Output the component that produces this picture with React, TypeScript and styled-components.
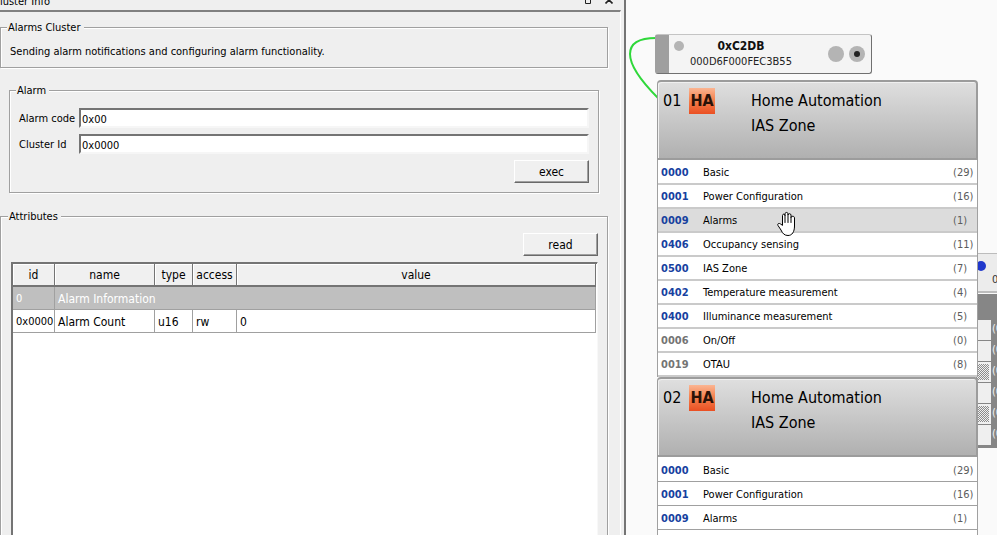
import React from 'react';
import styled, { createGlobalStyle } from 'styled-components';

const GlobalStyle = createGlobalStyle`
  *, *::before, *::after { box-sizing: border-box; }
  body {
    margin: 0;
    background: #fafafa;
    color: #000;
    font: 11px/14px 'DejaVu Sans Condensed', 'DejaVu Sans', sans-serif;
  }
`;

const Page = styled.main`
  display: grid;
  grid-template-columns: 626fr 371fr;
  height: 100vh;
  overflow: hidden;
`;

/* ---------- dock with the cluster details ---------- */

const Dock = styled.aside`
  display: flex;
  flex-direction: column;
  min-width: 0;
  min-height: 0;
  padding-right: 3px;
  background: #efefef;
  border-right: 2px solid #747474;
  overflow: hidden;
`;

const TitleBar = styled.header`
  display: flex;
  align-items: flex-end;
  gap: 13px;
  flex: none;
  height: 10px;
  padding: 0 8px 1px 0;
  overflow: hidden;
`;

const DockTitle = styled.h1`
  flex: 1;
  margin: 0 0 0 -7px;
  font-size: 11px;
  font-weight: 400;
  white-space: nowrap;
`;

const TitleButton = styled.button`
  display: flex;
  padding: 0 0 5px;
  border: 0;
  background: none;
`;

const ScrollArea = styled.div`
  flex: 1;
  min-height: 0;
  padding: 8px 12px 0 0;
  border-top: 2px solid #808080;
  border-right: 1px solid #fff;
  overflow: hidden;
`;

const Group = styled.fieldset<{ $body: string; $outer?: string }>`
  min-width: 0;
  margin: ${p => p.$outer ?? '0'};
  padding: ${p => p.$body};
  border: 1px solid #a0a0a0;
  box-shadow: 1px 1px 0 #fff, inset 1px 1px 0 #fff;
`;

const Legend = styled.legend`
  height: 14px;
  margin-left: -3px;
  padding: 0 3px 0 1px;
  background: #efefef;
  line-height: 16px;
`;

const Description = styled.p`
  margin: 0;
`;

const Form = styled.form`
  display: grid;
  grid-template-columns: 60px 1fr;
  gap: 6px 0;
  align-items: center;
`;

const FieldLabel = styled.label`
  padding-top: 2px;
`;

const Field = styled.input`
  width: 100%;
  min-width: 0;
  height: 20px;
  padding: 2px 1px 0;
  border: 2px solid;
  border-color: #747474 #f6f6f6 #f6f6f6 #747474;
  background: #fff;
  color: #000;
  font: inherit;
  outline: 0;
`;

const Actions = styled.div`
  grid-column: 1 / -1;
  display: flex;
  justify-content: flex-end;
`;

const PushButton = styled.button`
  width: 75px;
  height: 23px;
  padding: 0;
  border: 1px solid;
  border-color: #fff #696969 #696969 #fff;
  box-shadow: inset -1px -1px 0 #a0a0a0;
  background: #f0f0f0;
  color: #000;
  font: 12px/16px 'DejaVu Sans Condensed', 'DejaVu Sans', sans-serif;
`;

const TableFrame = styled.div`
  height: 100vh;
  margin-top: 6px;
  border: 1px solid;
  border-color: #747474 #f8f8f8 #f8f8f8 #747474;
  box-shadow: inset 1px 1px 0 #747474;
  padding: 1px 1px 0 1px;
  background: #fff;
`;

const Table = styled.table`
  width: 100%;
  table-layout: fixed;
  border-collapse: separate;
  border-spacing: 0;
  font-size: 12px;
  line-height: 16px;
  white-space: nowrap;
`;

const HeadCell = styled.th`
  height: 23px;
  padding: 1px 0 0;
  border-right: 1px solid #747474;
  border-bottom: 2px solid #747474;
  box-shadow: inset 1px 1px 0 #fff;
  background: #f0f0f0;
  font-weight: 400;
  text-align: center;
`;

const Cell = styled.td<{ $selected?: boolean }>`
  height: 23px;
  padding: 1px 0 0 3px;
  border-right: 1px solid #a0a0a0;
  border-bottom: 1px solid #a0a0a0;
  background: ${p => (p.$selected ? '#bfbfbf' : '#fff')};
  color: ${p => (p.$selected ? '#fff' : '#000')};
`;

const IdCell = styled(Cell)`
  font-size: 11px;
`;

/* ---------- node graph ---------- */

const Canvas = styled.section`
  position: relative;
  min-width: 0;
  background: #fafafa;
  overflow: hidden;
`;

const Link = styled.svg`
  position: absolute;
  left: 0;
  top: 30px;
`;

const Node = styled.article`
  position: absolute;
  left: 29px;
  top: 34px;
  width: 323px;
`;

const NodeCard = styled.header`
  display: flex;
  align-items: center;
  gap: 5px;
  width: 217px;
  height: 40px;
  padding-right: 6px;
  border: 1px solid;
  border-color: #c4c4c4 #707070 #707070 #9f9f9f;
  border-radius: 3px;
  background: #f4f4f4;
`;

const Grip = styled.span`
  align-self: stretch;
  width: 13px;
  background: #9f9f9f;
`;

const Led = styled.span<{ $size: number }>`
  display: grid;
  place-items: center;
  flex: none;
  width: ${p => p.$size}px;
  height: ${p => p.$size}px;
  border-radius: 50%;
  background: #b4b4b4;
`;

const SmallLed = styled(Led)`
  align-self: flex-start;
  margin-top: 6px;
`;

const LedDot = styled.i`
  width: 6px;
  height: 6px;
  border-radius: 50%;
  background: #222;
`;

const Address = styled.div`
  flex: 1;
  padding: 0 30px 1px 0;
  color: #222;
  line-height: 16px;
  text-align: center;
  white-space: nowrap;
`;

const ShortAddress = styled.h2`
  margin: 0;
  font-size: 12px;
  line-height: 16px;
  color: #111;
`;

const Endpoints = styled.div`
  margin: 6px 0 0 2px;
`;

const EndpointHeader = styled.header`
  display: grid;
  grid-template-columns: 26px 62px 1fr;
  align-items: start;
  height: 80px;
  padding: 6px 4px 0 5px;
  border: 2px solid #9c9c9c;
  border-left-width: 1px;
  border-radius: 4px 4px 0 0;
  box-shadow: inset 1px 1px 0 #f0f0f0;
  background: linear-gradient(#dfdfdf, #b0b0b0);
  font-size: 16px;
  line-height: 25px;
`;

const EndpointTitle = styled.h3`
  margin: 0;
  font-size: 16px;
  font-weight: 400;
`;

const Badge = styled.span`
  display: grid;
  place-items: center;
  width: 26px;
  height: 26px;
  background: linear-gradient(#fbb592, #f5824f 45%, #ea4f22);
  color: #2a1208;
  font-size: 16px;
  font-weight: 700;
  line-height: 26px;
`;

const ClusterList = styled.ul`
  margin: 0;
  padding: 1px 0 0;
  list-style: none;
  border: solid #a0a0a0;
  border-width: 0 1px;
  background: #fff;
`;

const Cluster = styled.li<{ $active?: boolean; $thin?: boolean }>`
  display: grid;
  grid-template-columns: 42px 1fr 24px;
  align-items: center;
  height: 24px;
  padding: 2px 0 0 3px;
  border-bottom: ${p => (p.$thin ? '1px solid #a0a0a0' : '2px solid #cacaca')};
  background: ${p => (p.$active ? '#dcdcdc' : '#fff')};
`;

const ClusterId = styled.strong<{ $client?: boolean }>`
  color: ${p => (p.$client ? '#747474' : '#17419f')};
`;

const Count = styled.span`
  color: #5c5c5c;
`;

const NeighbourNode = styled.article`
  position: absolute;
  left: 340px;
  top: 253px;
  width: 200px;
`;

const NeighbourCard = styled.header`
  display: flex;
  gap: 6px;
  height: 40px;
  padding: 7px 0 0 10px;
  border: solid #bcbcbc;
  border-width: 1px 0 2px;
  background: #ececec;
`;

const BlueLed = styled.span`
  width: 10px;
  height: 10px;
  border-radius: 50%;
  background: #2038cc;
`;

const NeighbourAddress = styled.span`
  margin-top: 12px;
  color: #333;
`;

const NeighbourBody = styled.ul`
  display: grid;
  gap: 1px;
  margin: 1px 0 0;
  padding: 26px 0 3px;
  list-style: none;
  background: #868686;
`;

const NeighbourRow = styled.li`
  display: flex;
  gap: 1px;
  height: 20px;
  color: #f4f4f4;
  line-height: 18px;
`;

const Swatch = styled.span<{ $dither: boolean }>`
  width: 25px;
  border: ${p => (p.$dither ? '2px solid #f0f0f0' : '0')};
  background: ${p =>
    p.$dither
      ? 'repeating-conic-gradient(#8c8c8c 0 25%, #f0f0f0 0 50%) 0 0 / 2px 2px'
      : '#efefef'};
`;

const Hand = styled.svg`
  position: absolute;
  left: 151px;
  top: 211px;
`;

type ClusterRow = { id: string; name: string; count: number; client?: boolean; active?: boolean };

const firstClusters: ClusterRow[] = [
  { id: '0000', name: 'Basic', count: 29 },
  { id: '0001', name: 'Power Configuration', count: 16 },
  { id: '0009', name: 'Alarms', count: 1, active: true },
  { id: '0406', name: 'Occupancy sensing', count: 11 },
  { id: '0500', name: 'IAS Zone', count: 7 },
  { id: '0402', name: 'Temperature measurement', count: 4 },
  { id: '0400', name: 'Illuminance measurement', count: 5 },
  { id: '0006', name: 'On/Off', count: 0, client: true },
  { id: '0019', name: 'OTAU', count: 8, client: true },
];

const secondClusters: ClusterRow[] = [
  { id: '0000', name: 'Basic', count: 29 },
  { id: '0001', name: 'Power Configuration', count: 16 },
  { id: '0009', name: 'Alarms', count: 1 },
];

const neighbourRows = [false, false, true, false, true, false];

function Endpoint({ number, rows, thin }: { number: string; rows: ClusterRow[]; thin?: boolean }) {
  return (
    <section>
      <EndpointHeader>
        <span>{number}</span>
        <Badge>HA</Badge>
        <EndpointTitle>
          Home Automation
          <br />
          IAS Zone
        </EndpointTitle>
      </EndpointHeader>
      <ClusterList>
        {rows.map(row => (
          <Cluster key={row.id} $active={row.active} $thin={thin}>
            <ClusterId $client={row.client}>{row.id}</ClusterId>
            <span>{row.name}</span>
            <Count>({row.count})</Count>
          </Cluster>
        ))}
      </ClusterList>
    </section>
  );
}

export default function App() {
  return (
    <>
      <GlobalStyle />
      <Page>
        <Dock>
          <TitleBar>
            <DockTitle>Cluster Info</DockTitle>
            <TitleButton type="button" aria-label="Float">
              <svg width="8" height="8" viewBox="0 0 8 8" fill="none" stroke="#222">
                <path d="M1.5 1.5H6.5V7.5H1.5Z" />
              </svg>
            </TitleButton>
            <TitleButton type="button" aria-label="Close">
              <svg width="8" height="8" viewBox="0 0 8 8" fill="none" stroke="#222" strokeWidth="1.6">
                <path d="M0.5 0.5L7.5 7.5M7.5 0.5L0.5 7.5" />
              </svg>
            </TitleButton>
          </TitleBar>
          <ScrollArea>
            <Group $body="11px 9px 8px">
              <Legend>Alarms Cluster</Legend>
              <Description>
                Sending alarm notifications and configuring alarm functionality.
              </Description>
            </Group>
            <Group $body="11px 9px 9px" $outer="15px 9px 0">
              <Legend>Alarm</Legend>
              <Form onSubmit={e => e.preventDefault()}>
                <FieldLabel htmlFor="alarm-code">Alarm code</FieldLabel>
                <Field id="alarm-code" defaultValue="0x00" />
                <FieldLabel htmlFor="cluster-id">Cluster Id</FieldLabel>
                <Field id="cluster-id" defaultValue="0x0000" />
                <Actions>
                  <PushButton type="submit">exec</PushButton>
                </Actions>
              </Form>
            </Group>
            <Group $body="10px 9px 9px 10px" $outer="16px 0 0">
              <Legend>Attributes</Legend>
              <Actions>
                <PushButton type="button">read</PushButton>
              </Actions>
              <TableFrame>
                <Table>
                  <colgroup>
                    <col width="42" />
                    <col width="100" />
                    <col width="38" />
                    <col width="44" />
                    <col />
                  </colgroup>
                  <thead>
                    <tr>
                      <HeadCell>id</HeadCell>
                      <HeadCell>name</HeadCell>
                      <HeadCell>type</HeadCell>
                      <HeadCell>access</HeadCell>
                      <HeadCell>value</HeadCell>
                    </tr>
                  </thead>
                  <tbody>
                    <tr>
                      <IdCell $selected>0</IdCell>
                      <Cell $selected colSpan={4}>Alarm Information</Cell>
                    </tr>
                    <tr>
                      <IdCell>0x0000</IdCell>
                      <Cell>Alarm Count</Cell>
                      <Cell>u16</Cell>
                      <Cell>rw</Cell>
                      <Cell>0</Cell>
                    </tr>
                  </tbody>
                </Table>
              </TableFrame>
            </Group>
          </ScrollArea>
        </Dock>

        <Canvas>
          <NeighbourNode>
            <NeighbourCard>
              <BlueLed />
              <NeighbourAddress>000D</NeighbourAddress>
            </NeighbourCard>
            <NeighbourBody>
              {neighbourRows.map((dither, i) => (
                <NeighbourRow key={i}>
                  <Swatch $dither={dither} />
                  <span>(0)</span>
                </NeighbourRow>
              ))}
            </NeighbourBody>
          </NeighbourNode>

          <Link width="40" height="80" viewBox="0 0 40 80" fill="none" stroke="#2fd83a" strokeWidth="2">
            <path d="M30 8C14 8 4 12 4 24C4 38 18 54 32 68" />
          </Link>

          <Node>
            <NodeCard>
              <Grip />
              <SmallLed $size={10} />
              <Address>
                <ShortAddress>0xC2DB</ShortAddress>
                000D6F000FEC3B55
              </Address>
              <Led $size={16} />
              <Led $size={16}>
                <LedDot />
              </Led>
            </NodeCard>
            <Endpoints>
              <Endpoint number="01" rows={firstClusters} />
              <Endpoint number="02" rows={secondClusters} thin />
              <ClusterList>
                <Cluster />
              </ClusterList>
            </Endpoints>
          </Node>

          <Hand width="20" height="26" viewBox="0 0 20 26" fill="#fff" stroke="#000" strokeLinejoin="round" strokeLinecap="round">
            <path d="M5.5 14V4.5C5.5 2.7 8 2.7 8 4.5V2.8C8 1 11 1 11 2.8V4C11 2.3 14 2.3 14 4V6.5C14 4.8 17.5 4.8 17.5 6.8V15C17.5 21 15 24.5 11 24.5C7.5 24.5 5.5 22.5 4 19L1 14.5C0 12.6 2 11.8 3.3 12.8Z" />
            <path d="M8 4.5V11.5M11 4V11.5M14 6.5V11.5" />
          </Hand>
        </Canvas>
      </Page>
    </>
  );
}
